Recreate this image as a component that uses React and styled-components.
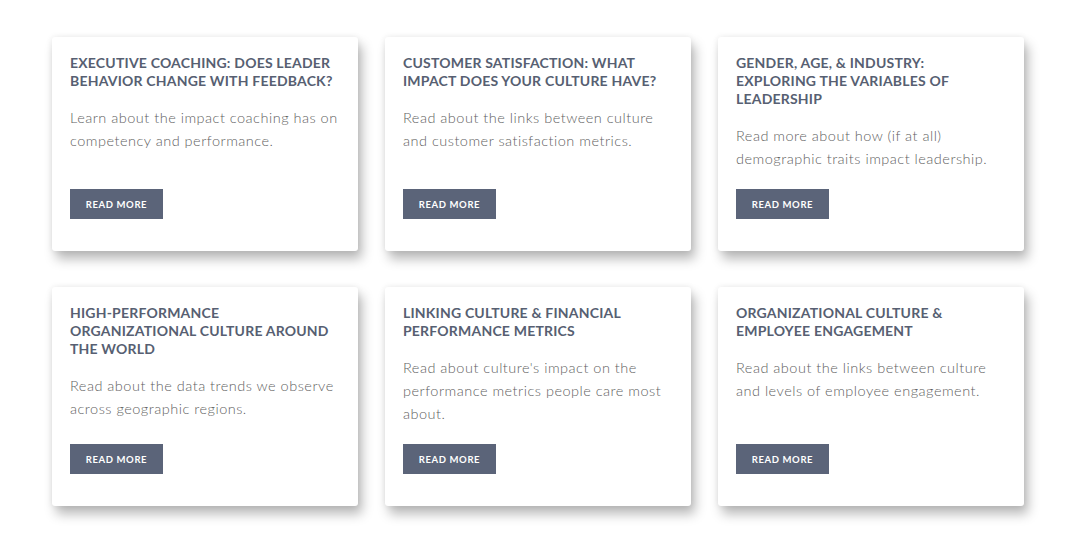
import React from 'react';
import styled, { createGlobalStyle } from 'styled-components';

const Global = createGlobalStyle`
  html, body {
    margin: 0;
    background: #fff;
  }
  body {
    font-family: Lato, "Open Sans", sans-serif;
  }
`;

const Grid = styled.div`
  display: grid;
  grid-template-columns: repeat(3, 306px);
  column-gap: 27px;
  row-gap: 36px;
  padding: 37px 0 50px 52px;
`;

const Card = styled.div`
  display: flex;
  flex-direction: column;
  align-items: flex-start;
  background: #fff;
  border-radius: 3px;
  box-shadow: 4px 8px 12px rgba(0, 0, 0, 0.28), 0 0 6px rgba(0, 0, 0, 0.08);
  padding: 17px 18px 32px;
`;

const Title = styled.h3`
  margin: 0 0 16px;
  font-size: 14px;
  line-height: 18px;
  font-weight: 700;
  text-transform: uppercase;
  color: #575f72;
  letter-spacing: 0.2px;
`;

const Text = styled.p`
  margin: 0 0 19px;
  font-size: 14.5px;
  line-height: 23px;
  font-weight: 300;
  letter-spacing: 0.5px;
  color: #5f5f5f;
`;

const Button = styled.a`
  margin-top: auto;
  display: inline-flex;
  align-items: center;
  justify-content: center;
  width: 93px;
  height: 30px;
  background: #5b6479;
  color: #fff;
  font-size: 9.5px;
  font-weight: 700;
  letter-spacing: 0.6px;
  text-decoration: none;
`;

const posts = [
  {
    title: 'Executive Coaching: Does Leader Behavior Change with Feedback?',
    text: 'Learn about the impact coaching has on competency and performance.',
  },
  {
    title: 'Customer Satisfaction: What Impact Does Your Culture Have?',
    text: 'Read about the links between culture and customer satisfaction metrics.',
  },
  {
    title: 'Gender, Age, & Industry: Exploring the Variables of Leadership',
    text: 'Read more about how (if at all) demographic traits impact leadership.',
  },
  {
    title: 'High-Performance Organizational Culture Around the World',
    text: 'Read about the data trends we observe across geographic regions.',
  },
  {
    title: 'Linking Culture & Financial Performance Metrics',
    text: "Read about culture's impact on the performance metrics people care most about.",
  },
  {
    title: 'Organizational Culture & Employee Engagement',
    text: 'Read about the links between culture and levels of employee engagement.',
  },
];

const App = () => (
  <>
    <Global />
    <Grid>
      {posts.map((p) => (
        <Card key={p.title}>
          <Title>{p.title}</Title>
          <Text>{p.text}</Text>
          <Button href="#">READ MORE</Button>
        </Card>
      ))}
    </Grid>
  </>
);

export default App;
